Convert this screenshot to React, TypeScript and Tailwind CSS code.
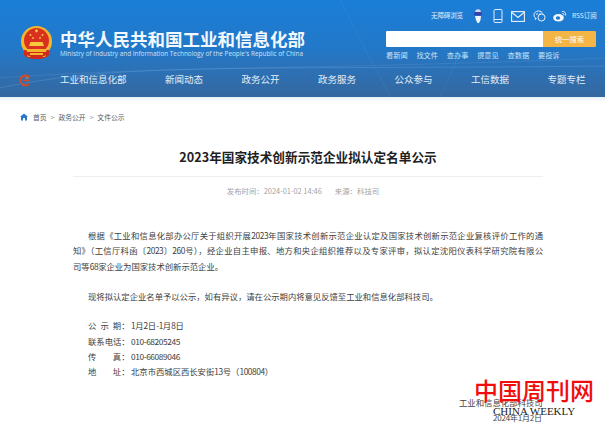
import React from "react";

const cjk = { fontFamily: '"Noto Sans CJK SC", "Noto Sans", sans-serif' };

function Emblem() {
  return (
    <svg width="33" height="34" viewBox="0 0 33 34">
      <circle cx="16.5" cy="15.5" r="15.5" fill="#f4b62c" />
      <circle cx="16.5" cy="14.5" r="12.5" fill="#d9301f" />
      <path d="M15 4.5l1.5-1.5 1.5 1.5-.6 1.8h-1.8z" fill="#f6c93c" />
      <circle cx="10.5" cy="9" r="1" fill="#f6c93c" />
      <circle cx="22.5" cy="9" r="1" fill="#f6c93c" />
      <circle cx="13" cy="12" r="0.9" fill="#f6c93c" />
      <circle cx="20" cy="12" r="0.9" fill="#f6c93c" />
      <path d="M9 20h15l-1.5-4h-12z" fill="#f6c93c" />
      <path d="M4 24h25v5c-3 3-6 4-12.500 4S7 32 4 29z" fill="#cf2a1c" />
      <path d="M6 23h21l-1 3H7zM10 27h13v2H10zM7 29l4 2-3 0zM26 29l-4 2 3 0z" fill="#f4b62c" />
    </svg>
  );
}

function NavLogo() {
  return (
    <svg width="12" height="13" viewBox="0 0 12 13" fill="none">
      <path d="M10.500 3.500A5 5 0 1 0 10 10" stroke="#d84a22" strokeWidth="2" />
      <path d="M4 6.500h7" stroke="#d84a22" strokeWidth="1.600" />
      <path d="M6.500 4h3" stroke="#e98a3a" strokeWidth="1" />
    </svg>
  );
}

function Robot() {
  return (
    <svg width="10" height="15" viewBox="0 0 10 15">
      <circle cx="5" cy="3" r="2.800" fill="#cfd9f5" />
      <rect x="1" y="3" width="8" height="3.500" rx="1.500" fill="#3b3fa8" />
      <path d="M2 7h6l-.5 4-1.500 3H4.500L3 11z" fill="#f3f6fb" />
    </svg>
  );
}

function Phone() {
  return (
    <svg width="10" height="14" viewBox="0 0 10 14" fill="none" stroke="#dcebfa" strokeWidth="1">
      <rect x="1" y="0.500" width="8" height="13" rx="1" />
      <path d="M1 10.500h8" />
    </svg>
  );
}

function Mail() {
  return (
    <svg width="14" height="11" viewBox="0 0 14 11" fill="none" stroke="#e8f2fc" strokeWidth="1.100">
      <rect x="0.600" y="0.600" width="12.800" height="9.800" />
      <path d="M1 1.500l6 5 6-5" />
    </svg>
  );
}

function Wechat() {
  return (
    <svg width="13" height="12" viewBox="0 0 13 12" fill="none" stroke="#e8f2fc" strokeWidth="1">
      <path d="M5.500 1C2.900 1 1 2.800 1 5c0 1.200.6 2.200 1.500 3l-.4 1.400 1.500-.8" />
      <path d="M5.500 1c2 0 3.600 1 4.200 2.600" />
      <circle cx="8.500" cy="7.500" r="3.500" />
      <circle cx="4" cy="4" r="0.400" />
      <circle cx="7" cy="4" r="0.400" />
    </svg>
  );
}

function Weibo() {
  return (
    <svg width="14" height="12" viewBox="0 0 14 12">
      <ellipse cx="5.500" cy="7.800" rx="5.300" ry="3.800" fill="#f4f8fd" />
      <ellipse cx="5" cy="8" rx="2.200" ry="1.700" fill="#1f78cc" />
      <path d="M9 1.500c2.500-.5 4.300 1.500 3.600 4M9.300 3.500c1.200-.2 1.800.6 1.500 1.800" stroke="#f4f8fd" strokeWidth="0.900" fill="none" />
    </svg>
  );
}

function HomeIcon() {
  return (
    <svg width="8" height="8" viewBox="0 0 8 8">
      <path d="M4 .5L8 4H7v3.500H5V5H3v2.500H1V4H0z" fill="#2a78c8" />
    </svg>
  );
}

function HeaderLines() {
  return (
    <svg className="absolute inset-0 h-full w-full" viewBox="0 0 605 97" preserveAspectRatio="none">
      <path d="M0 88C120 62 250 70 605 66" stroke="#7fb4e6" strokeOpacity="0.25" strokeWidth="1" fill="none" />
      <path d="M0 78C160 66 320 70 605 58" stroke="#7fb4e6" strokeOpacity="0.18" strokeWidth="1" fill="none" />
      <path d="M340 0L390 97M470 30L440 97" stroke="#7fb4e6" strokeOpacity="0.12" strokeWidth="1" fill="none" />
    </svg>
  );
}

const navItems = [
  { label: "工业和信息化部", w: "w-[105px]" },
  { label: "新闻动态", w: "w-[76.500px]" },
  { label: "政务公开", w: "w-[76.500px]" },
  { label: "政务服务", w: "w-[76.500px]" },
  { label: "公众参与", w: "w-[76.500px]" },
  { label: "工信数据", w: "w-[76.500px]" },
  { label: "专题专栏", w: "w-[40px]" },
];

const quick = ["看新闻", "找文件", "查办事", "提意见", "查数据", "要投诉"];

function Num({ children }: { children: React.ReactNode }) {
  return <span className="tracking-[-0.400px]">{children}</span>;
}

function Row({ chars, children }: { chars: string[]; children: React.ReactNode }) {
  return (
    <div className="flex">
      <span className="flex w-[33.200px] justify-between">
        {chars.map((c) => (
          <span key={c}>{c}</span>
        ))}
      </span>
      <span className="w-[9.800px]">：</span>
      <span>{children}</span>
    </div>
  );
}

export default function App() {
  return (
    <div className="relative h-[430px] w-[605px] overflow-hidden bg-white" style={cjk}>
      <header className="relative h-[97px] bg-gradient-to-b from-[#1a7ed8] via-[#2278c8] to-[#34689f]">
        <HeaderLines />
        <div className="relative flex h-[65px]">
          <div className="ml-[20px] mt-[26px]">
            <Emblem />
          </div>
          <div className="ml-[7px] mt-[28px] w-[270px]">
            <div className="text-[17.500px] font-bold leading-[22px] whitespace-nowrap text-[#f2f8fe]">
              中华人民共和国工业和信息化部
            </div>
            <div
              className="text-[6.400px] leading-[8px] whitespace-nowrap text-[#cfe3f6]"
              style={{ fontFamily: '"Open Sans", sans-serif' }}
            >
              Ministry of Industry and Information Technology of the People's Republic of China
            </div>
          </div>
          <div className="ml-[56px] flex w-[210px] flex-col">
            <div className="mt-[10px] flex h-[12px] items-center pl-[45px] text-[6.500px] whitespace-nowrap text-[#e3effa]">
              <span className="w-[32px] tracking-[-0.100px]">无障碍浏览</span>
              <span className="ml-[10px] flex">
                <Robot />
              </span>
              <span className="ml-[10px] flex">
                <Phone />
              </span>
              <span className="ml-[8px] flex">
                <Mail />
              </span>
              <span className="ml-[8px] flex">
                <Wechat />
              </span>
              <span className="ml-[7px] flex">
                <Weibo />
              </span>
              <span className="ml-[5px]">RSS订阅</span>
            </div>
            <div className="mt-[9px] flex h-[16px] w-[210px] overflow-hidden rounded-[1px]">
              <div className="w-[157px] bg-white" />
              <div className="flex flex-1 items-center justify-center bg-[#f3b545] text-[7.300px] text-white">统一搜索</div>
            </div>
            <div className="mt-[2px] flex gap-[8px] text-[7.200px] leading-[12px] whitespace-nowrap text-[#cfe2f5]">
              {quick.map((q) => (
                <span key={q} className="w-[22.400px]">
                  {q}
                </span>
              ))}
            </div>
          </div>
        </div>
        <nav className="relative flex h-[32px] items-start pl-[19px]">
          <div className="mt-[9px] w-[41px]">
            <NavLogo />
          </div>
          <div className="flex text-[9.500px] leading-[14px] whitespace-nowrap text-[#e4eef8]">
            {navItems.map((n) => (
              <span key={n.label} className={`mt-[7px] ${n.w}`}>
                {n.label}
              </span>
            ))}
          </div>
        </nav>
      </header>
      <div className="h-[5px] bg-gradient-to-b from-[#e8f0f8] to-white" />

      <div className="mt-[10px] flex h-[10px] items-center gap-[4px] pl-[20px] text-[6.800px] text-[#4c5b6a]">
        <HomeIcon />
        <span className="ml-[1px]">首页</span>
        <span className="text-[#7a8590]">&gt;</span>
        <span>政务公开</span>
        <span className="text-[#7a8590]">&gt;</span>
        <span>文件公示</span>
      </div>

      <main className="ml-[73px] mt-[25px] w-[470px]">
        <h1 className="border-b border-[#efefef] pb-[9px] text-center text-[12.650px] leading-[20px] font-bold text-[#1f1f1f]">
          2023年国家技术创新示范企业拟认定名单公示
        </h1>
        <div className="mt-[9px] pr-[10px] text-center text-[7.400px] leading-[10px] text-[#a3a3a3]">
          <span>发布时间：2024-01-02 14:46</span>
          <span className="ml-[13px]">来源：科技司</span>
        </div>

        <div className="mt-[32px] text-[8.330px] leading-[15.400px] whitespace-nowrap text-[#404040]">
          <p className="ml-[15px] text-justify [text-align-last:justify]">
            根据《工业和信息化部办公厅关于组织开展<Num>2023</Num>年国家技术创新示范企业认定及国家技术创新示范企业复核评价工作的通
          </p>
          <p className="text-justify [text-align-last:justify]">
            知》（工信厅科函〔<Num>2023</Num>〕<Num>260</Num>号），经企业自主申报、地方和央企组织推荐以及专家评审，拟认定沈阳仪表科学研究院有限公
          </p>
          <p>
            司等<Num>68</Num>家企业为国家技术创新示范企业。
          </p>
          <p className="ml-[15px] mt-[15px]">
            现将拟认定企业名单予以公示，如有异议，请在公示期内将意见反馈至工业和信息化部科技司。
          </p>
          <div className="ml-[15px] mt-[13.500px] flex flex-col">
            <Row chars={["公", "示", "期"]}>
              <Num>1</Num>月<Num>2</Num>日<Num>-1</Num>月<Num>8</Num>日
            </Row>
            <Row chars={["联", "系", "电", "话"]}>
              <Num>010-68205245</Num>
            </Row>
            <Row chars={["传", "真"]}>
              <Num>010-66089046</Num>
            </Row>
            <Row chars={["地", "址"]}>
              北京市西城区西长安街<Num>13</Num>号（<Num>100804</Num>）
            </Row>
          </div>
        </div>
      </main>

      <div className="absolute left-[459px] top-[397px] text-[8.400px] leading-[10px] whitespace-nowrap text-[#444444]">工业和信息化部科技司</div>
      <div className="absolute left-[493px] top-[413px] text-[8px] leading-[10px] tracking-[-0.200px] whitespace-nowrap text-[#444444]">2024年1月2日</div>
      <div className="absolute left-[474px] top-[377px] text-[24px] leading-[26px] font-medium whitespace-nowrap text-[#f20d0d]" style={{ fontFamily: '"Noto Sans CJK SC", serif' }}>
        中国周刊网
      </div>
      <div className="absolute left-[493px] top-[405px] text-[11px] leading-[12px] whitespace-nowrap text-[#222222]" style={{ fontFamily: '"Liberation Serif", serif' }}>
        CHINA WEEKLY
      </div>
    </div>
  );
}
